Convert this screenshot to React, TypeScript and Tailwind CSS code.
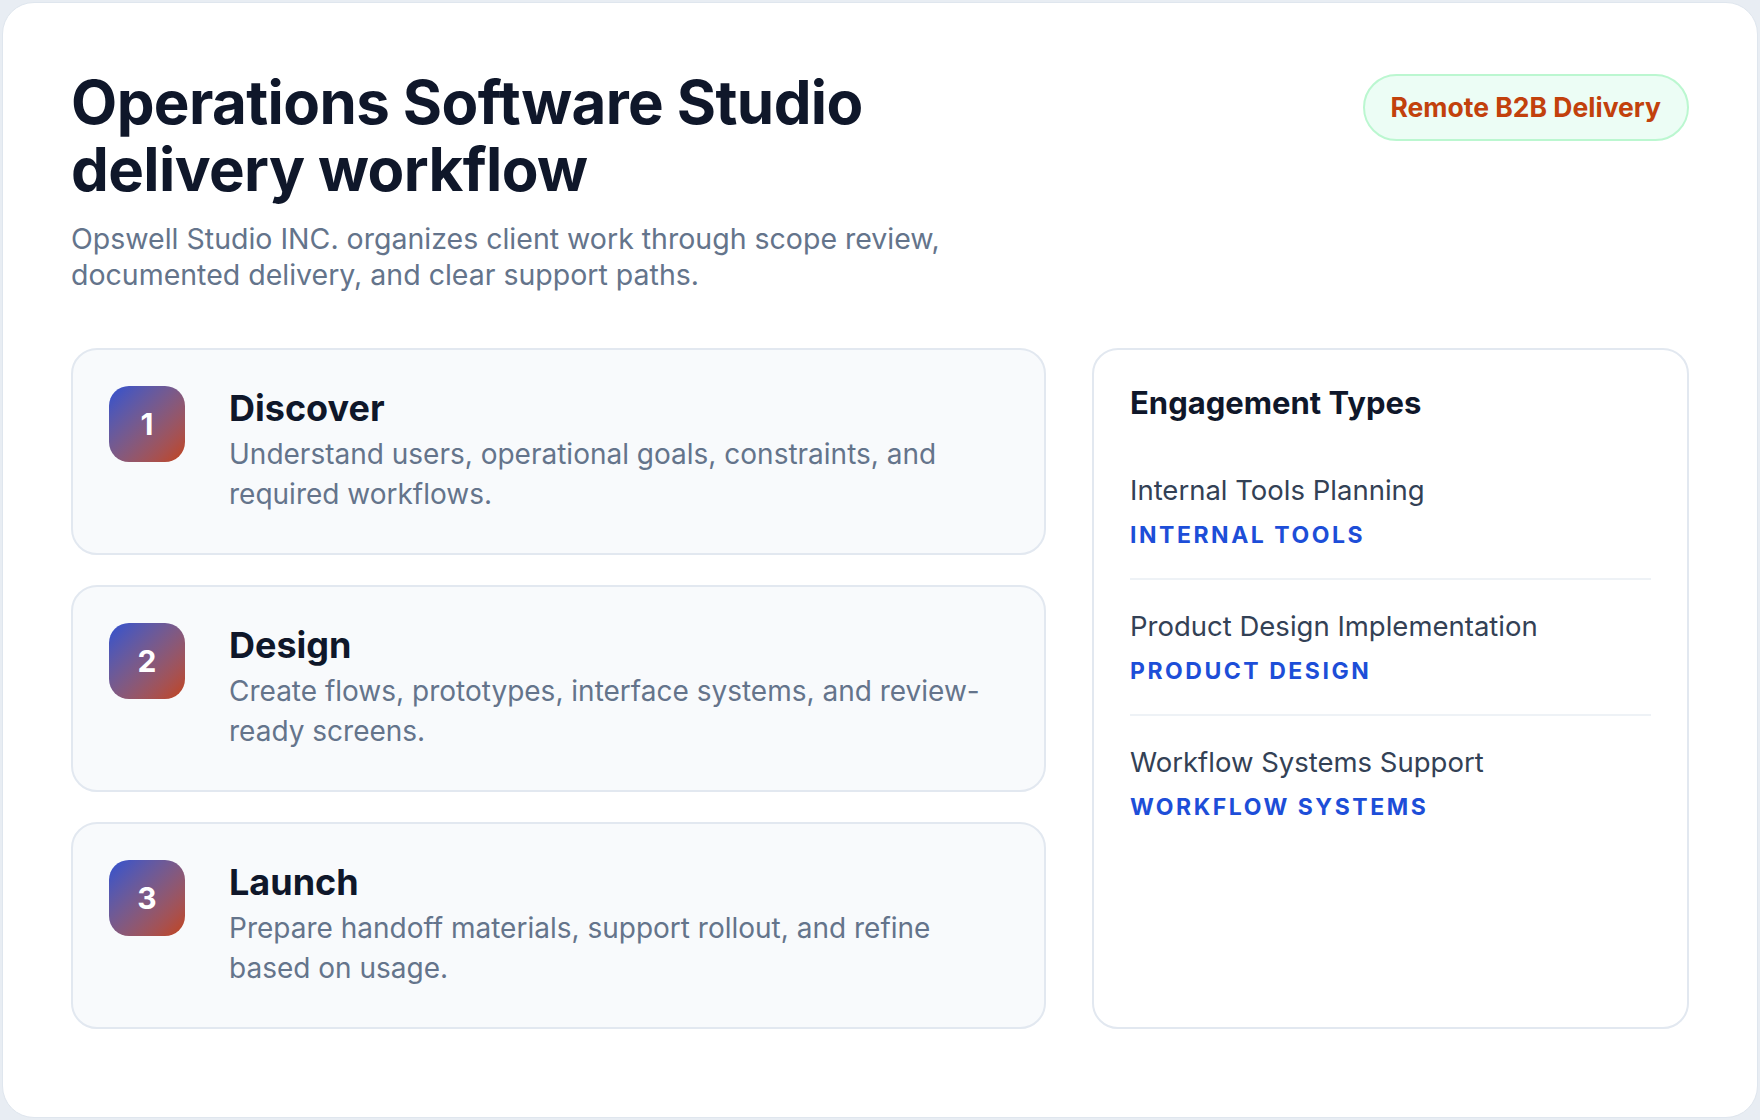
export default function App() {
  const steps = [
    { n: "1", t: "Discover", d: "Understand users, operational goals, constraints, and required workflows." },
    { n: "2", t: "Design", d: "Create flows, prototypes, interface systems, and review-ready screens." },
    { n: "3", t: "Launch", d: "Prepare handoff materials, support rollout, and refine based on usage." },
  ];
  const types = [
    { name: "Internal Tools Planning", tag: "INTERNAL TOOLS" },
    { name: "Product Design Implementation", tag: "PRODUCT DESIGN" },
    { name: "Workflow Systems Support", tag: "WORKFLOW SYSTEMS" },
  ];
  return (
    <div className="h-[1120px] w-[1760px] bg-[#e8edf3] p-[2px]" style={{ fontFamily: "Inter, 'Noto Sans', sans-serif" }}>
      <div className="h-full rounded-[32px] border border-[#dfe6ee] bg-white px-[68px] pt-[66px]">
        <div className="flex items-start justify-between">
          <div>
            <h1 className="text-[60px] font-bold leading-[67px] tracking-[-0.01em] text-[#0f172a]">
              Operations Software Studio
              <br />
              delivery workflow
            </h1>
            <p className="mt-[18px] w-[960px] text-[28.5px] leading-[36px] text-[#64748b]">
              Opswell Studio INC. organizes client work through scope review,
              <br />
              documented delivery, and clear support paths.
            </p>
          </div>
          <div className="mt-[5px] flex h-[67px] items-center rounded-full border-2 border-[#bbf7d0] bg-[#ecfdf5] px-[26px] text-[26.5px] font-bold text-[#c2410c]">
            Remote B2B Delivery
          </div>
        </div>
        <div className="mt-[55px] flex gap-[46px]">
          <div className="flex w-[975px] flex-col gap-[30px]">
            {steps.map((s) => (
              <div key={s.n} className="flex h-[207px] gap-[44px] rounded-[26px] border-2 border-[#e2e8f0] bg-[#f8fafc] px-[36px] pt-[36px]">
                <div className="flex h-[76px] w-[76px] shrink-0 items-center justify-center rounded-[20px] bg-gradient-to-br from-[#2f4fd0] to-[#c2410c] text-[30px] font-bold text-white">
                  {s.n}
                </div>
                <div>
                  <div className="text-[36px] font-bold leading-[44px] text-[#0f172a]">{s.t}</div>
                  <div className="mt-[4px] w-[780px] text-[28px] leading-[40px] text-[#64748b]">{s.d}</div>
                </div>
              </div>
            ))}
          </div>
          <div className="h-[681px] flex-1 rounded-[26px] border-2 border-[#e2e8f0] bg-white px-[36px] pt-[33px]">
            <div className="text-[31px] font-bold leading-[40px] text-[#0f172a]">Engagement Types</div>
            <div className="mt-[38px]">
              {types.map((ty, i) => (
                <div key={ty.tag} className={`py-[27px] ${i < 2 ? "border-b-2 border-[#eef2f6]" : ""} ${i === 0 ? "pt-[10px]" : ""}`}>
                  <div className="text-[27.5px] leading-[38px] text-[#334155]">{ty.name}</div>
                  <div className="mt-[10px] text-[23px] font-bold leading-[32px] tracking-[0.11em] text-[#1d4ed8]">{ty.tag}</div>
                </div>
              ))}
            </div>
          </div>
        </div>
      </div>
    </div>
  );
}
